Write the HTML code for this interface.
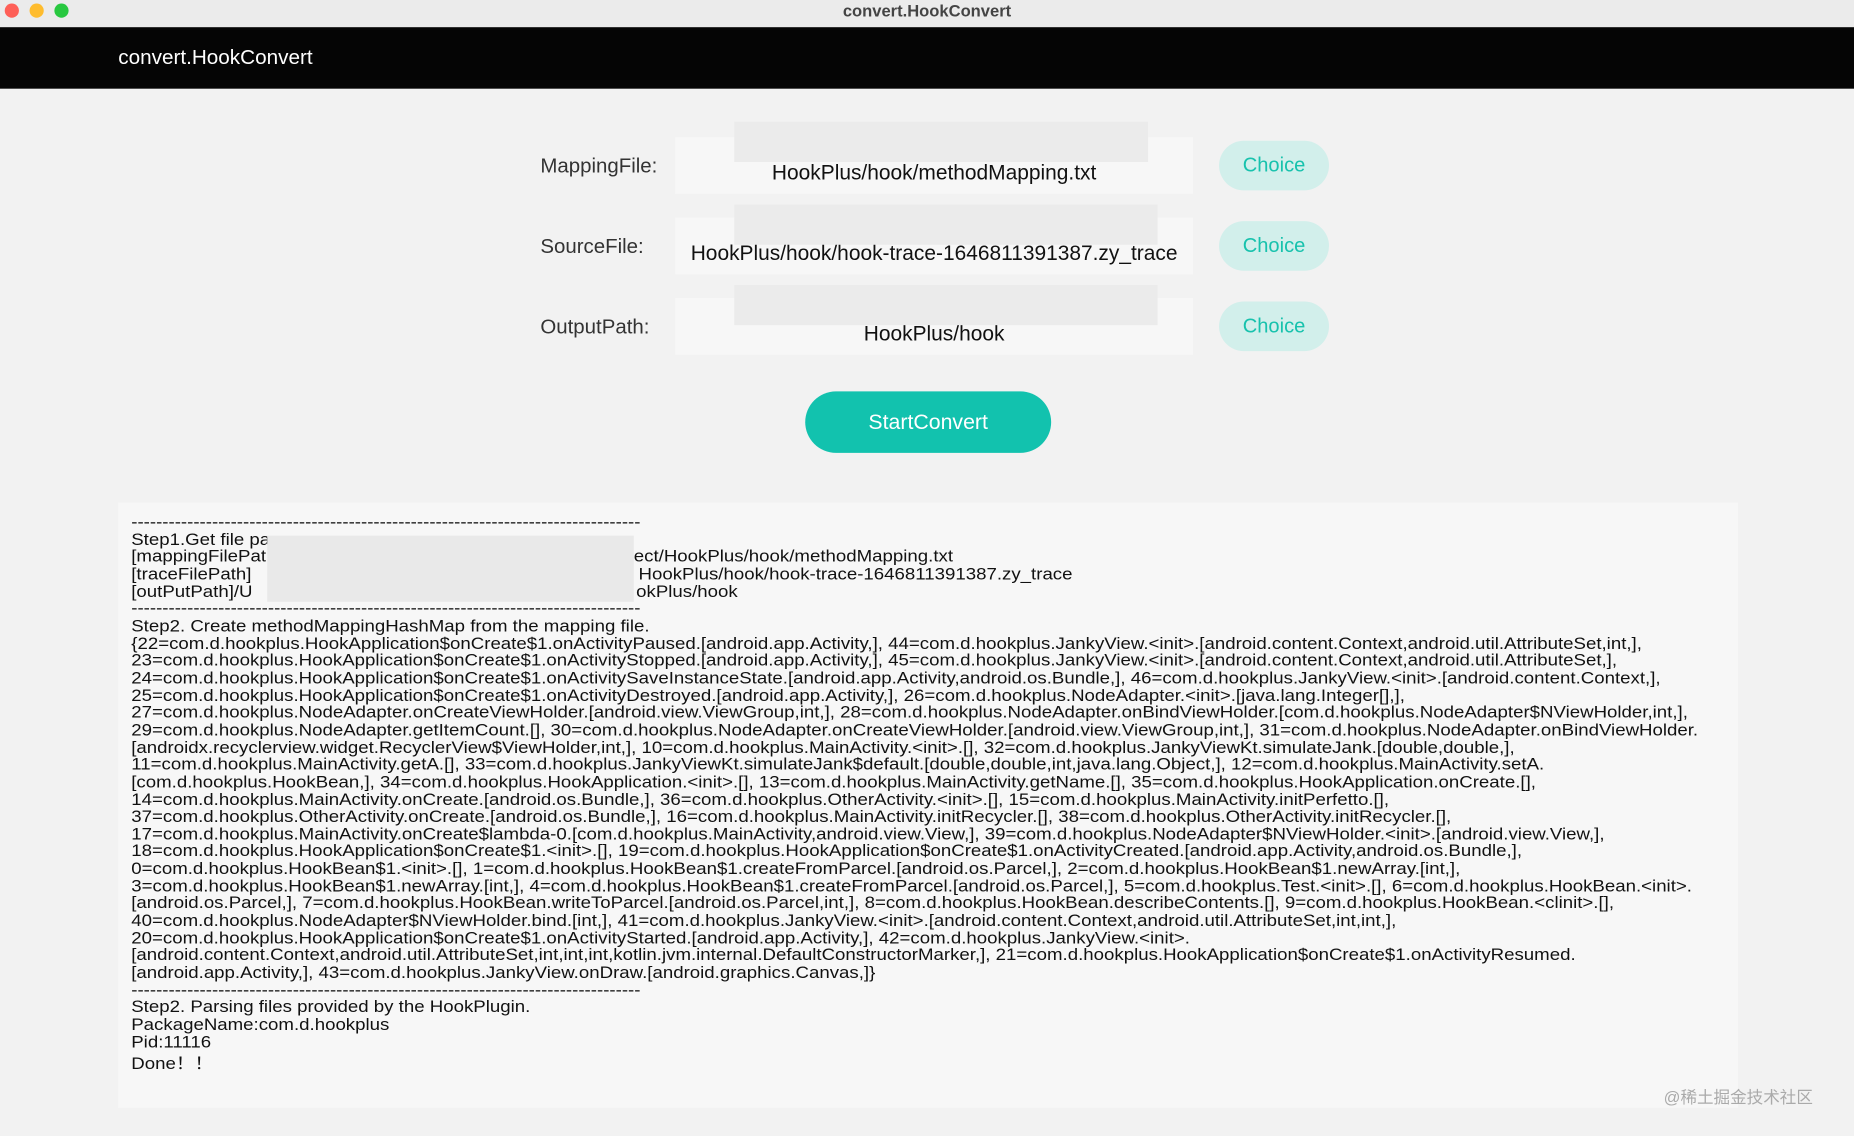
<!DOCTYPE html>
<html><head><meta charset="utf-8"><style>
html,body{margin:0;padding:0;width:1854px;height:1136px;overflow:hidden;background:#f2f2f2;}
#w{position:absolute;left:0;top:0;width:1568px;height:961px;transform:scale(1.18240);transform-origin:0 0;font-family:"Liberation Sans","Noto Sans CJK SC",sans-serif;background:#f2f2f2;}
.a{position:absolute;}
.tl{position:absolute;top:3px;width:12px;height:12px;border-radius:50%;}
.lab{position:absolute;left:457px;font-size:17.3px;color:#333;}
.box{position:absolute;left:571px;width:438px;height:48px;background:#f7f7f7;}
.box span{position:absolute;left:-20px;right:-20px;bottom:7px;text-align:center;font-size:17.7px;color:#111;white-space:nowrap;}
.blur{position:absolute;background:#ebebeb;}
.ch{position:absolute;left:1031px;width:93px;height:42px;border-radius:21px;background:#d2efeb;color:#18c2ad;font-size:17px;text-align:center;line-height:42px;}
#log{position:absolute;left:100px;top:425px;width:1370px;height:512px;background:#f7f7f7;}
#log pre,.sf{margin:0;position:absolute;font-family:"Liberation Sans",sans-serif;font-size:14.1px;line-height:14.65px;color:#111;white-space:pre;transform:scaleX(1.119);transform-origin:0 0;}
#log pre{left:11px;top:9px;}
</style></head><body><div id="w">
<div class="a" style="left:0;top:0;width:1568px;height:23px;background:#ebebeb;"></div>
<div class="tl" style="left:4px;background:#fe5f57"></div>
<div class="tl" style="left:25px;background:#febc2e"></div>
<div class="tl" style="left:46px;background:#28c840"></div>
<div class="a" style="left:0;width:1568px;top:1px;text-align:center;font-size:14px;font-weight:bold;color:#444;">convert.HookConvert</div>
<div class="a" style="left:0;top:23px;width:1568px;height:52px;background:#050505;"></div>
<div class="a" style="left:100px;top:38px;font-size:17.5px;color:#fff;">convert.HookConvert</div>

<div class="lab" style="top:130px">MappingFile:</div>
<div class="box" style="top:116px"><span>HookPlus/hook/methodMapping.txt</span></div>
<div class="blur" style="left:621px;top:103px;width:350px;height:34px"></div>
<div class="ch" style="top:119px">Choice</div>

<div class="lab" style="top:198px">SourceFile:</div>
<div class="box" style="top:184px"><span>HookPlus/hook/hook-trace-1646811391387.zy_trace</span></div>
<div class="blur" style="left:621px;top:173px;width:358px;height:34px"></div>
<div class="ch" style="top:187px">Choice</div>

<div class="lab" style="top:266px">OutputPath:</div>
<div class="box" style="top:252px"><span>HookPlus/hook</span></div>
<div class="blur" style="left:621px;top:241px;width:358px;height:34px"></div>
<div class="ch" style="top:255px">Choice</div>

<div class="a" style="left:681px;top:331px;width:208px;height:52px;border-radius:26px;background:#12c2ae;color:#fff;font-size:18px;text-align:center;line-height:52px;">StartConvert</div>

<div id="log"><pre>----------------------------------------------------------------------------------
Step1.Get file pa
[mappingFilePat
[traceFilePath]
[outPutPath]/U
----------------------------------------------------------------------------------
Step2. Create methodMappingHashMap from the mapping file.
{22=com.d.hookplus.HookApplication$onCreate$1.onActivityPaused.[android.app.Activity,], 44=com.d.hookplus.JankyView.&lt;init&gt;.[android.content.Context,android.util.AttributeSet,int,],
23=com.d.hookplus.HookApplication$onCreate$1.onActivityStopped.[android.app.Activity,], 45=com.d.hookplus.JankyView.&lt;init&gt;.[android.content.Context,android.util.AttributeSet,],
24=com.d.hookplus.HookApplication$onCreate$1.onActivitySaveInstanceState.[android.app.Activity,android.os.Bundle,], 46=com.d.hookplus.JankyView.&lt;init&gt;.[android.content.Context,],
25=com.d.hookplus.HookApplication$onCreate$1.onActivityDestroyed.[android.app.Activity,], 26=com.d.hookplus.NodeAdapter.&lt;init&gt;.[java.lang.Integer[],],
27=com.d.hookplus.NodeAdapter.onCreateViewHolder.[android.view.ViewGroup,int,], 28=com.d.hookplus.NodeAdapter.onBindViewHolder.[com.d.hookplus.NodeAdapter$NViewHolder,int,],
29=com.d.hookplus.NodeAdapter.getItemCount.[], 30=com.d.hookplus.NodeAdapter.onCreateViewHolder.[android.view.ViewGroup,int,], 31=com.d.hookplus.NodeAdapter.onBindViewHolder.
[androidx.recyclerview.widget.RecyclerView$ViewHolder,int,], 10=com.d.hookplus.MainActivity.&lt;init&gt;.[], 32=com.d.hookplus.JankyViewKt.simulateJank.[double,double,],
11=com.d.hookplus.MainActivity.getA.[], 33=com.d.hookplus.JankyViewKt.simulateJank$default.[double,double,int,java.lang.Object,], 12=com.d.hookplus.MainActivity.setA.
[com.d.hookplus.HookBean,], 34=com.d.hookplus.HookApplication.&lt;init&gt;.[], 13=com.d.hookplus.MainActivity.getName.[], 35=com.d.hookplus.HookApplication.onCreate.[],
14=com.d.hookplus.MainActivity.onCreate.[android.os.Bundle,], 36=com.d.hookplus.OtherActivity.&lt;init&gt;.[], 15=com.d.hookplus.MainActivity.initPerfetto.[],
37=com.d.hookplus.OtherActivity.onCreate.[android.os.Bundle,], 16=com.d.hookplus.MainActivity.initRecycler.[], 38=com.d.hookplus.OtherActivity.initRecycler.[],
17=com.d.hookplus.MainActivity.onCreate$lambda-0.[com.d.hookplus.MainActivity,android.view.View,], 39=com.d.hookplus.NodeAdapter$NViewHolder.&lt;init&gt;.[android.view.View,],
18=com.d.hookplus.HookApplication$onCreate$1.&lt;init&gt;.[], 19=com.d.hookplus.HookApplication$onCreate$1.onActivityCreated.[android.app.Activity,android.os.Bundle,],
0=com.d.hookplus.HookBean$1.&lt;init&gt;.[], 1=com.d.hookplus.HookBean$1.createFromParcel.[android.os.Parcel,], 2=com.d.hookplus.HookBean$1.newArray.[int,],
3=com.d.hookplus.HookBean$1.newArray.[int,], 4=com.d.hookplus.HookBean$1.createFromParcel.[android.os.Parcel,], 5=com.d.hookplus.Test.&lt;init&gt;.[], 6=com.d.hookplus.HookBean.&lt;init&gt;.
[android.os.Parcel,], 7=com.d.hookplus.HookBean.writeToParcel.[android.os.Parcel,int,], 8=com.d.hookplus.HookBean.describeContents.[], 9=com.d.hookplus.HookBean.&lt;clinit&gt;.[],
40=com.d.hookplus.NodeAdapter$NViewHolder.bind.[int,], 41=com.d.hookplus.JankyView.&lt;init&gt;.[android.content.Context,android.util.AttributeSet,int,int,],
20=com.d.hookplus.HookApplication$onCreate$1.onActivityStarted.[android.app.Activity,], 42=com.d.hookplus.JankyView.&lt;init&gt;.
[android.content.Context,android.util.AttributeSet,int,int,int,kotlin.jvm.internal.DefaultConstructorMarker,], 21=com.d.hookplus.HookApplication$onCreate$1.onActivityResumed.
[android.app.Activity,], 43=com.d.hookplus.JankyView.onDraw.[android.graphics.Canvas,]}
----------------------------------------------------------------------------------
Step2. Parsing files provided by the HookPlugin.
PackageName:com.d.hookplus
Pid:11116
<span style="display:inline-block;margin-top:4px">Done！！</span></pre>
<div class="sf" style="left:436px;top:38px">ect/HookPlus/hook/methodMapping.txt</div>
<div class="sf" style="left:440px;top:53px">HookPlus/hook/hook-trace-1646811391387.zy_trace</div>
<div class="sf" style="left:438px;top:68px">okPlus/hook</div>
<div class="blur" style="left:126px;top:28px;width:310px;height:56px;background:#e9e9e9"></div>
</div>
<div class="a" style="left:1407px;top:918px;font-size:14px;color:#aaa;">@稀土掘金技术社区</div>
</div></body></html>
